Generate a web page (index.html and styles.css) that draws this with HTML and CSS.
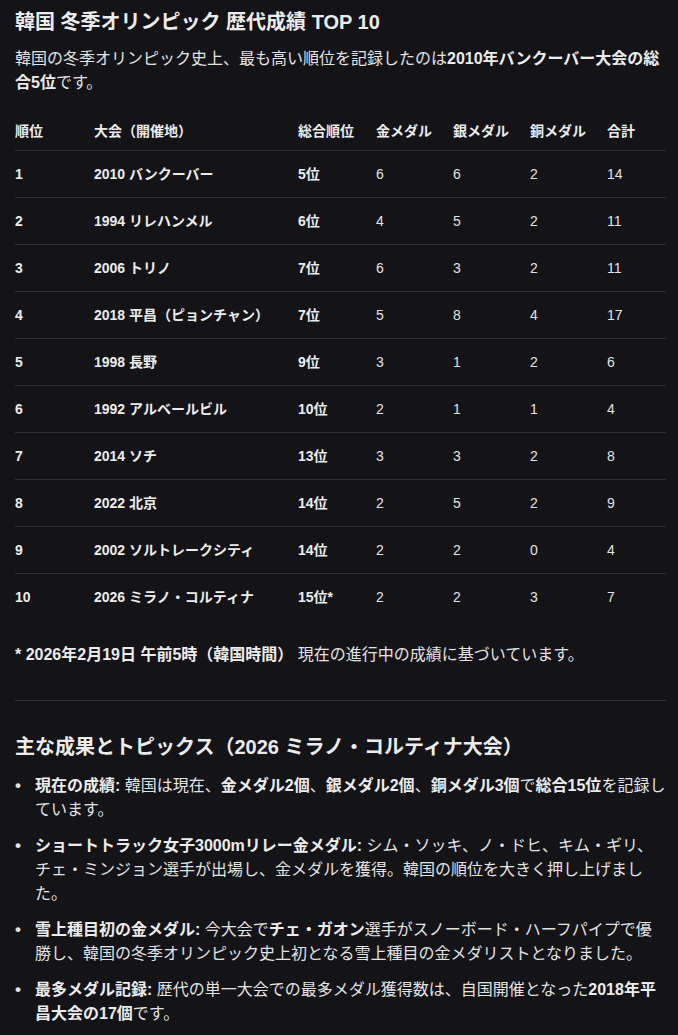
FILE: index.html
```html
<!DOCTYPE html>
<html lang="ja">
<head>
<meta charset="utf-8">
<title>韓国 冬季オリンピック 歴代成績 TOP 10</title>
<link rel="stylesheet" href="styles.css">
</head>
<body>
<main class="page">
  <h1 class="title">韓国 冬季オリンピック 歴代成績 TOP 10</h1>
  <p class="lead">韓国の冬季オリンピック史上、最も高い順位を記録したのは<strong>2010年バンクーバー大会の総合5位</strong>です。</p>

  <table class="results">
    <colgroup>
      <col class="c-rank"><col class="c-games"><col class="c-overall"><col class="c-m"><col class="c-m"><col class="c-m"><col class="c-total">
    </colgroup>
    <thead>
      <tr><th>順位</th><th>大会（開催地）</th><th>総合順位</th><th>金メダル</th><th>銀メダル</th><th>銅メダル</th><th>合計</th></tr>
    </thead>
    <tbody>
      <tr><td class="b">1</td><td class="b">2010 バンクーバー</td><td class="b">5位</td><td>6</td><td>6</td><td>2</td><td>14</td></tr>
      <tr><td class="b">2</td><td class="b">1994 リレハンメル</td><td class="b">6位</td><td>4</td><td>5</td><td>2</td><td>11</td></tr>
      <tr><td class="b">3</td><td class="b">2006 トリノ</td><td class="b">7位</td><td>6</td><td>3</td><td>2</td><td>11</td></tr>
      <tr><td class="b">4</td><td class="b">2018 平昌（ピョンチャン）</td><td class="b">7位</td><td>5</td><td>8</td><td>4</td><td>17</td></tr>
      <tr><td class="b">5</td><td class="b">1998 長野</td><td class="b">9位</td><td>3</td><td>1</td><td>2</td><td>6</td></tr>
      <tr><td class="b">6</td><td class="b">1992 アルベールビル</td><td class="b">10位</td><td>2</td><td>1</td><td>1</td><td>4</td></tr>
      <tr><td class="b">7</td><td class="b">2014 ソチ</td><td class="b">13位</td><td>3</td><td>3</td><td>2</td><td>8</td></tr>
      <tr><td class="b">8</td><td class="b">2022 北京</td><td class="b">14位</td><td>2</td><td>5</td><td>2</td><td>9</td></tr>
      <tr><td class="b">9</td><td class="b">2002 ソルトレークシティ</td><td class="b">14位</td><td>2</td><td>2</td><td>0</td><td>4</td></tr>
      <tr><td class="b">10</td><td class="b">2026 ミラノ・コルティナ</td><td class="b">15位*</td><td>2</td><td>2</td><td>3</td><td>7</td></tr>
    </tbody>
  </table>

  <p class="note"><strong>* 2026年2月19日 午前5時（韓国時間）</strong> 現在の進行中の成績に基づいています。</p>

  <hr class="rule">

  <h2 class="subtitle">主な成果とトピックス（2026 ミラノ・コルティナ大会）</h2>
  <ul class="topics">
    <li><strong>現在の成績:</strong> 韓国は現在、<strong>金メダル2個</strong>、<strong>銀メダル2個</strong>、<strong>銅メダル3個</strong>で<strong>総合15位</strong>を記録しています。</li>
    <li><strong>ショートトラック女子3000mリレー金メダル:</strong> シム・ソッキ、ノ・ドヒ、キム・ギリ、チェ・ミンジョン選手が出場し、金メダルを獲得。韓国の順位を大きく押し上げました。</li>
    <li><strong>雪上種目初の金メダル:</strong> 今大会で<strong>チェ・ガオン</strong>選手がスノーボード・ハーフパイプで優勝し、韓国の冬季オリンピック史上初となる雪上種目の金メダリストとなりました。</li>
    <li><strong>最多メダル記録:</strong> 歴代の単一大会での最多メダル獲得数は、自国開催となった<strong>2018年平昌大会の17個</strong>です。</li>
  </ul>
</main>
</body>
</html>
```

FILE: styles.css
```css
html, body {
  margin: 0;
  padding: 0;
  background: #131318;
}

body {
  color: #e3e3e3;
  font-family: "Liberation Sans", "Noto Sans CJK JP", sans-serif;
  font-size: 16px;
  line-height: 24px;
}

.page {
  padding: 8px 12px 0 15px;
}

strong {
  font-weight: 700;
  color: #ececec;
}

.title {
  margin: 0 0 11px;
  font-size: 20px;
  line-height: 28px;
  font-weight: 700;
  color: #ececec;
}

.lead {
  margin: 0 0 17px;
}

.results {
  width: 651px;
  border-collapse: collapse;
  table-layout: fixed;
  font-size: 14px;
  line-height: 22px;
  margin: 0 0 23px;
}

.c-rank { width: 79px; }
.c-games { width: 204px; }
.c-overall { width: 78px; }
.c-m { width: 77px; }
.c-total { width: 59px; }

.results th {
  text-align: left;
  font-weight: 700;
  color: #ececec;
  padding: 8px 0;
  white-space: nowrap;
}

.results td {
  padding: 12px 0;
  border-top: 1px solid #2f3035;
  white-space: nowrap;
  color: #e3e3e3;
}

.results td.b {
  font-weight: 700;
  color: #ececec;
}

.note {
  margin: 0;
}

.rule {
  border: 0;
  border-top: 1px solid #333439;
  margin: 33px 0 32px;
  height: 0;
}

.subtitle {
  margin: 0 0 13px;
  font-size: 20px;
  line-height: 28px;
  font-weight: 700;
  color: #ececec;
}

.topics {
  margin: 0;
  padding: 0 0 0 20px;
  list-style: none;
}

.topics li {
  margin: 0 0 12px;
}

.topics li::before {
  content: "\2022";
  display: inline-block;
  width: 20px;
  margin-left: -20px;
  font-size: 17px;
  font-weight: 700;
}
```
